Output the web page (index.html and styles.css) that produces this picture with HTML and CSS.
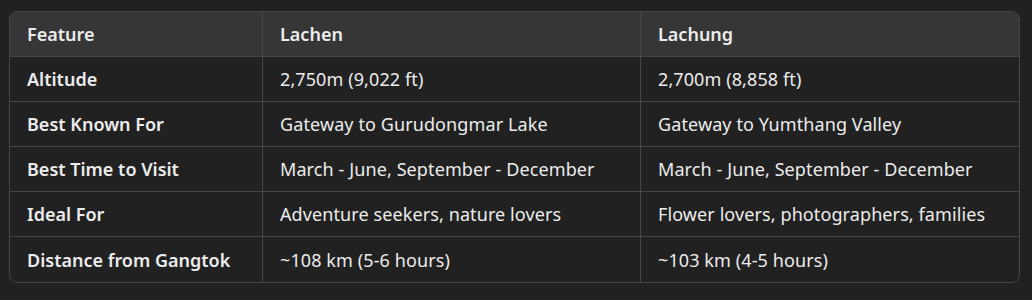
FILE: index.html
```html
<!DOCTYPE html>
<html>
<head>
<meta charset="utf-8">
<link rel="stylesheet" href="styles.css">
</head>
<body>
<div class="wrap">
<table class="cmp">
<colgroup><col class="c1"><col class="c2"><col class="c3"></colgroup>
<thead>
<tr><th>Feature</th><th>Lachen</th><th>Lachung</th></tr>
</thead>
<tbody>
<tr><td class="k">Altitude</td><td>2,750m (9,022 ft)</td><td>2,700m (8,858 ft)</td></tr>
<tr><td class="k">Best Known For</td><td>Gateway to Gurudongmar Lake</td><td>Gateway to Yumthang Valley</td></tr>
<tr><td class="k">Best Time to Visit</td><td>March - June, September - December</td><td>March - June, September - December</td></tr>
<tr><td class="k">Ideal For</td><td>Adventure seekers, nature lovers</td><td>Flower lovers, photographers, families</td></tr>
<tr><td class="k">Distance from Gangtok</td><td>~108 km (5-6 hours)</td><td>~103 km (4-5 hours)</td></tr>
</tbody>
</table>
</div>
</body>
</html>
```
FILE: styles.css
```css
html, body { margin: 0; padding: 0; background: #212121; }
body { font-family: "Noto Sans", "Open Sans", sans-serif; color: #ececec; }
.wrap { padding: 11px 12px 0 9px; }
.cmp {
  width: 1011px;
  table-layout: fixed;
  border-collapse: separate;
  border-spacing: 0;
  border: 1px solid #464646;
  border-radius: 8px;
  overflow: hidden;
  font-size: 18px;
}
.c1 { width: 253px; }
.c2 { width: 378px; }
.c3 { width: auto; }
th, td {
  height: 45px;
  padding: 0 17px;
  text-align: left;
  border-bottom: 1px solid #464646;
  border-right: 1px solid #464646;
  box-sizing: border-box;
  white-space: nowrap;
  line-height: 22px;
}
th:last-child, td:last-child { border-right: none; }
tbody tr:last-child td { border-bottom: none; }
th { background: #363636; font-weight: 600; }
td.k { font-weight: 600; letter-spacing: 0; }
td { font-weight: 400; letter-spacing: 0.1px; }
```
